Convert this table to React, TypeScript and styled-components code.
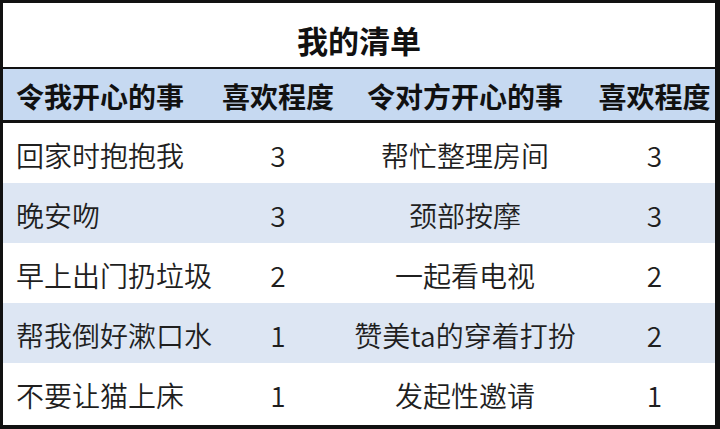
import React from "react";
import styled, { createGlobalStyle } from "styled-components";

const Global = createGlobalStyle`
  html, body { margin: 0; padding: 0; background: #ffffff; }
  * { box-sizing: border-box; }
`;

const Frame = styled.div`
  width: 720px;
  height: 429px;
  border-style: solid;
  border-color: #111111;
  border-width: 3px 5px 4px 3px;
  background: #ffffff;
  font-family: "Noto Sans CJK SC", "Noto Sans", sans-serif;
  display: flex;
  flex-direction: column;
`;

const Title = styled.div`
  height: 66px;
  display: flex;
  align-items: center;
  justify-content: center;
  padding-top: 8px;
  font-size: 31px;
  font-weight: 700;
  color: #111111;
  border-bottom: 2px solid #111111;
`;

const Grid = styled.div`
  display: grid;
  grid-template-columns: 217px 116px 258px 1fr;
`;

const HeaderRow = styled(Grid)`
  height: 54px;
  background: #c6d9f1;
  border-bottom: 3px solid #111111;
  font-weight: 700;
  color: #111111;
`;

const Row = styled(Grid)<{ $striped: boolean }>`
  height: 60px;
  background: ${(p) => (p.$striped ? "#dde6f3" : "#ffffff")};
  color: #1f1f1f;
  font-weight: 350;
`;

const Cell = styled.div<{ $left?: boolean }>`
  display: flex;
  align-items: center;
  justify-content: ${(p) => (p.$left ? "flex-start" : "center")};
  padding-left: ${(p) => (p.$left ? "13px" : "0")};
  font-size: 28px;
  white-space: nowrap;
  padding-top: 3px;
`;

const rows: [string, number, string, number][] = [
  ["回家时抱抱我", 3, "帮忙整理房间", 3],
  ["晚安吻", 3, "颈部按摩", 3],
  ["早上出门扔垃圾", 2, "一起看电视", 2],
  ["帮我倒好漱口水", 1, "赞美ta的穿着打扮", 2],
  ["不要让猫上床", 1, "发起性邀请", 1],
];

export default function App() {
  return (
    <>
      <Global />
      <Frame>
        <Title>我的清单</Title>
        <HeaderRow>
          <Cell $left>令我开心的事</Cell>
          <Cell>喜欢程度</Cell>
          <Cell>令对方开心的事</Cell>
          <Cell>喜欢程度</Cell>
        </HeaderRow>
        {rows.map((r, i) => (
          <Row key={i} $striped={i % 2 === 1}>
            <Cell $left>{r[0]}</Cell>
            <Cell>{r[1]}</Cell>
            <Cell>{r[2]}</Cell>
            <Cell>{r[3]}</Cell>
          </Row>
        ))}
      </Frame>
    </>
  );
}
